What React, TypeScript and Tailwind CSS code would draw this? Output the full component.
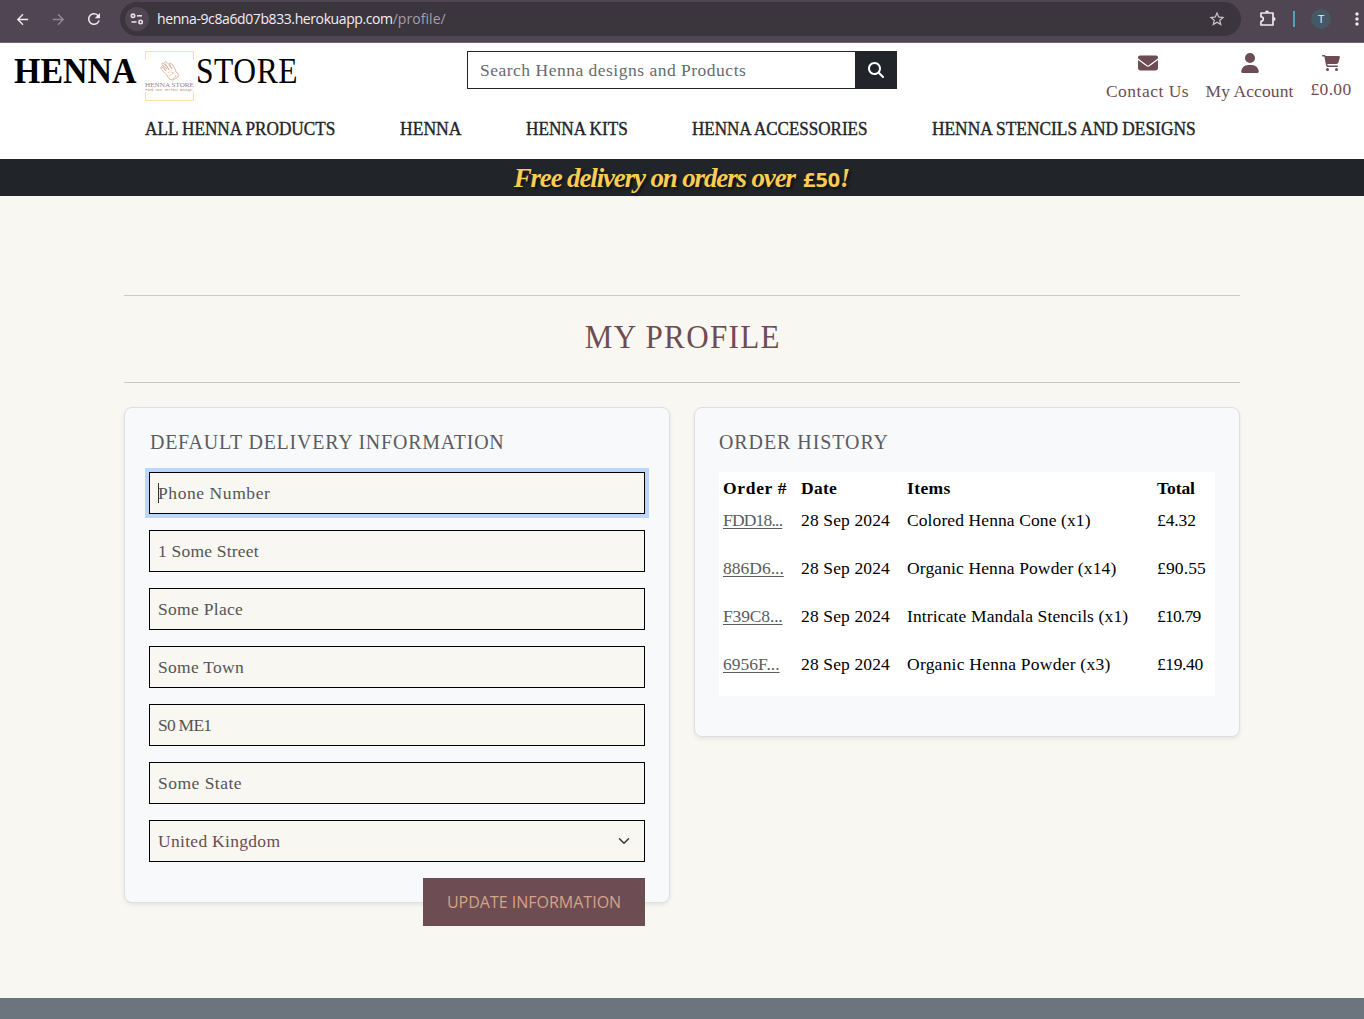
import React from "react";
import { FaEnvelope, FaUser, FaCartShopping, FaMagnifyingGlass } from "react-icons/fa6";
import { MdArrowBack, MdArrowForward, MdRefresh, MdStarBorder, MdMoreVert } from "react-icons/md";

const navItems = [
  { label: "ALL HENNA PRODUCTS", box: "w-[255px]", fit: "scale-x-[0.904]" },
  { label: "HENNA", box: "w-[126px]", fit: "scale-x-[0.925]" },
  { label: "HENNA KITS", box: "w-[166px]", fit: "scale-x-[0.905]" },
  { label: "HENNA ACCESSORIES", box: "w-[240px]", fit: "scale-x-[0.896]" },
  { label: "HENNA STENCILS AND DESIGNS", box: "w-[264px]", fit: "scale-x-[0.913]" },
];

const fields = [
  { value: "1 Some Street", tracking: "tracking-[0.2px]" },
  { value: "Some Place", tracking: "tracking-[0.3px]" },
  { value: "Some Town", tracking: "tracking-[0.28px]" },
  { value: "S0 ME1", tracking: "tracking-[-0.75px]" },
  { value: "Some State", tracking: "tracking-[0.48px]" },
];

const orders = [
  { id: "FDD18...", idFit: "tracking-[-0.8px]", items: "Colored Henna Cone (x1)", itemsFit: "tracking-[0.1px]", total: "£4.32", totalFit: "tracking-[-0.1px]" },
  { id: "886D6...", idFit: "tracking-[0px]", items: "Organic Henna Powder (x14)", itemsFit: "tracking-[0.12px]", total: "£90.55", totalFit: "tracking-[0.15px]" },
  { id: "F39C8...", idFit: "tracking-[-0.15px]", items: "Intricate Mandala Stencils (x1)", itemsFit: "tracking-[0.13px]", total: "£10.79", totalFit: "tracking-[-0.8px]" },
  { id: "6956F...", idFit: "tracking-[0.02px]", items: "Organic Henna Powder (x3)", itemsFit: "tracking-[0.24px]", total: "£19.40", totalFit: "tracking-[-0.4px]" },
];

const inputStyle =
  "block h-[42px] w-full border border-black bg-[#f8f7f2] px-2 text-[17.5px] text-[#555] outline-none placeholder:text-[#555] placeholder:opacity-100";

function TuneIcon() {
  return (
    <svg viewBox="0 0 14 12" className="h-3 w-[14px]" fill="none" stroke="#e6e0e8" strokeWidth="1.6">
      <circle cx="3" cy="2.8" r="1.7" />
      <path d="M7 2.8h5" />
      <circle cx="10.6" cy="9" r="1.7" />
      <path d="M1.5 9h5" />
    </svg>
  );
}

function PuzzleIcon() {
  return (
    <svg viewBox="0 0 18 18" className="mb-0.5 ml-[18px] size-[18px]">
      <path d="M2 4h12v12H2v-3.6a2.3 2.3 0 0 0 0-4.6z" fill="none" stroke="currentColor" strokeWidth="1.7" strokeLinejoin="round" />
      <path d="M6 3.5a2 2 0 0 1 4 0zM14.5 8a2 2 0 0 1 0 4z" fill="currentColor" />
    </svg>
  );
}

function BrowserBar() {
  return (
    <div className="flex h-[43px] items-start border-b border-[#716578] bg-[#504552] text-[#eee8f0]">
      <div className="flex h-[38px] w-[120px] shrink-0 items-center gap-[19px] pl-[14px]">
        <MdArrowBack className="size-[17px]" />
        <MdArrowForward className="size-[17px] text-[#938896]" />
        <MdRefresh className="-ml-px size-[18px]" />
      </div>
      <div className="mt-0.5 flex h-[34px] w-[1121px] shrink-0 items-center rounded-full bg-[#3b353d] pl-[5px]">
        <div className="flex size-6 items-center justify-center rounded-full bg-[#504552]">
          <TuneIcon />
        </div>
        <p className="ml-2 grow whitespace-nowrap pb-0.5 font-['Open_Sans',sans-serif] text-[14px] tracking-[-0.4px] text-[#f2edf3]">
          henna-9c8a6d07b833.herokuapp.com<span className="tracking-[0.05px] text-[#a79eaa]">/profile/</span>
        </p>
        <MdStarBorder className="mr-[15px] size-[18px] text-[#cdc6cf]" />
      </div>
      <div className="flex h-[38px] shrink-0 items-center">
        <PuzzleIcon />
        <div className="ml-4 h-4 w-0.5 bg-[#5b9fb5]" />
        <div className="ml-4 flex size-5 items-center justify-center rounded-full bg-[#445963] font-['Liberation_Sans',sans-serif] text-[11px]">
          T
        </div>
        <MdMoreVert className="ml-4 size-[20px]" />
      </div>
    </div>
  );
}

function Logo() {
  return (
    <svg viewBox="0 0 50 50" className="size-[50px] overflow-visible" fill="none">
      <path d="M.5 9V.5h48V9M.5 41v8.5h48V41" stroke="#f8dfa0" />
      <g stroke="#d3a48c" strokeWidth=".8">
        <path d="M22 24c-3-2-7-7-6-8 1-.8 4 3 5 4-2-4-5-7-4-8s5 4 7 7c-2-4-5-7-4-8 2-1 5 4 7 7-2-3-3-6-2-6 2 0 5 5 6 9 2 1 3 3 2 5l-5 3c-3 0-5-2-6-5z" />
        <path d="M23 22l4-3M24 25l6-4M28 28l4-4M20 16l2 2M24 14l2 2M27 21l1 2M30 25h1M18 14l3 4" strokeDasharray="1 .7" />
      </g>
      <text x="0" y="35.5" textLength="49" lengthAdjust="spacingAndGlyphs" fontFamily="Liberation Serif, serif" fontSize="7" fill="#94828b">HENNA STORE</text>
      <text x=".5" y="39.5" textLength="48" lengthAdjust="spacingAndGlyphs" fontFamily="Liberation Mono, monospace" fontSize="3.6" fill="#98894f">Find Your Perfect Design.</text>
    </svg>
  );
}

function Header() {
  return (
    <header className="h-[116px] bg-white">
      <div className="flex h-[66px] items-start">
        <div className="flex w-[467px] shrink-0 items-start pl-[14px] text-[35px] leading-[40px] text-black">
          <span className="mt-[9px] w-[131px] origin-left scale-x-[0.97] whitespace-nowrap font-bold">HENNA</span>
          <div className="mt-2 w-[50px] shrink-0"><Logo /></div>
          <span className="mt-[9px] origin-left scale-x-[0.9] whitespace-nowrap pl-px tracking-[0.7px]">STORE</span>
        </div>
        <form className="mt-2 flex h-[38px] w-[430px] shrink-0">
          <input
            placeholder="Search Henna designs and Products"
            className="w-[388px] border border-r-0 border-[#212529] bg-white px-3 text-[17.5px] tracking-[0.5px] outline-none placeholder:text-[#666b70] placeholder:opacity-100"
          />
          <button type="button" className="flex w-[42px] items-center justify-center bg-[#212529] text-white">
            <FaMagnifyingGlass className="size-4" />
          </button>
        </form>
        <div className="flex grow items-start justify-end whitespace-nowrap pr-3 text-[17.5px] leading-6 text-[#6d4c53]">
          <a className="mr-4 mt-2 flex w-[83px] flex-col items-center">
            <FaEnvelope className="mt-[2px] size-5" />
            <span className="mt-[6px] tracking-[0.5px]">Contact Us</span>
          </a>
          <a className="mr-4 mt-2 flex w-[89px] flex-col items-center">
            <FaUser className="mt-[2px] size-5" />
            <span className="mt-[6px] tracking-[0.1px]">My Account</span>
          </a>
          <a className="mt-2 flex w-[42px] flex-col items-center">
            <FaCartShopping className="mt-[3px] size-[18px]" />
            <span className="mt-[5px] tracking-[0.35px]">£0.00</span>
          </a>
        </div>
      </div>
      <nav className="flex pl-[145px] pt-[8px] text-[19px] leading-6 text-[#212529] [-webkit-text-stroke:0.4px_#212529]">
        {navItems.map((n) => (
          <div key={n.label} className={`${n.box} shrink-0`}>
            <a className={`inline-block origin-left whitespace-nowrap ${n.fit}`}>{n.label}</a>
          </div>
        ))}
      </nav>
    </header>
  );
}

function DeliveryBanner() {
  return (
    <div className="flex h-[37px] items-center justify-center bg-[#212529]">
      <p className="mt-0.5 flex h-[37px] items-baseline whitespace-nowrap text-[27px] font-bold italic leading-[37px] text-[#fbcb52] [text-shadow:2px_2px_3px_rgba(0,0,0,0.6)]">
        <span className="tracking-[-1.15px]">Free delivery on orders over</span>
        <span className="ml-2 inline-block w-[37px] origin-left scale-x-[1.14] font-['Open_Sans',sans-serif] text-[19px] not-italic">£50</span>
        <span>!</span>
      </p>
    </div>
  );
}

function DeliveryCard() {
  return (
    <section className="h-[496px] w-[546px] rounded-lg border border-[#dbdfe8] bg-[#f8f9fb] px-6 pt-[22px] shadow-[0_2px_4px_rgba(0,0,0,0.075)]">
      <h2 className="origin-left scale-x-[0.95] whitespace-nowrap pl-px text-[21px] leading-6 tracking-[0.83px] text-[#5b5c60]">DEFAULT DELIVERY INFORMATION</h2>
      <form className="mt-[18px] flex flex-col gap-4">
        <div className="relative ring-4 ring-[#bbd6fa]">
          <input placeholder="Phone Number" className={`${inputStyle} tracking-[0.58px]`} />
          <span className="absolute left-[9px] top-[11px] h-5 w-px bg-[#333]" />
        </div>
        {fields.map((f) => (
          <input key={f.value} defaultValue={f.value} className={`${inputStyle} ${f.tracking}`} />
        ))}
        <button type="button" className={`${inputStyle} flex! items-center justify-between pr-[14px]! text-[#6d4c53]! tracking-[0.3px]`}>
          United Kingdom
          <svg viewBox="0 0 16 16" className="size-3" fill="none" stroke="#343a40" strokeWidth="2" strokeLinecap="round" strokeLinejoin="round">
            <path d="m2 5 6 6 6-6" />
          </svg>
        </button>
        <button type="button" className="h-12 w-[222px] self-end whitespace-nowrap bg-[#6d4c53] font-['Open_Sans',sans-serif] text-[16px] text-[#d6a384]">
          UPDATE INFORMATION
        </button>
      </form>
    </section>
  );
}

function OrderCard() {
  return (
    <section className="h-[330px] w-[546px] rounded-lg border border-[#dbdfe8] bg-[#f8f9fb] px-6 pt-[22px] shadow-[0_2px_4px_rgba(0,0,0,0.075)]">
      <h2 className="origin-left scale-x-[0.95] text-[21px] leading-6 tracking-[1px] text-[#5b5c60]">ORDER HISTORY</h2>
      <div className="mt-[18px] h-56 bg-white text-[17.5px] leading-6 text-black">
        <div className="grid h-8 grid-cols-[78px_106px_250px_1fr] items-start whitespace-nowrap pl-1 pt-1 font-bold">
          <span className="tracking-[0.68px]">Order #</span>
          <span className="tracking-[0.3px]">Date</span>
          <span className="tracking-[0.4px]">Items</span>
          <span className="tracking-[-0.08px]">Total</span>
        </div>
        {orders.map((o) => (
          <div key={o.id} className="grid h-12 grid-cols-[78px_106px_250px_1fr] items-start whitespace-nowrap pl-1 pt-1">
            <span><a className={`text-[#5b5c60] underline underline-offset-2 ${o.idFit}`}>{o.id}</a></span>
            <span className="tracking-[0.13px]">28 Sep 2024</span>
            <span className={o.itemsFit}>{o.items}</span>
            <span className={o.totalFit}>{o.total}</span>
          </div>
        ))}
      </div>
    </section>
  );
}

export default function App() {
  return (
    <div className="flex h-[1019px] w-[1364px] flex-col overflow-hidden bg-[#f8f7f2] font-['Liberation_Serif',serif]">
      <BrowserBar />
      <Header />
      <DeliveryBanner />
      <main className="mx-auto w-[1116px] grow pt-[99px]">
        <div className="flex h-[88px] justify-center border-y border-[#cbcac6] pt-5">
          <h1 className="origin-center scale-x-[0.9] whitespace-nowrap pl-0.5 text-[34.5px] leading-10 tracking-[1.5px] text-[#6d4c53]">MY PROFILE</h1>
        </div>
        <div className="mt-6 flex items-start justify-between">
          <DeliveryCard />
          <OrderCard />
        </div>
      </main>
      <footer className="h-[21px] shrink-0 bg-[#6c757d]" />
    </div>
  );
}
